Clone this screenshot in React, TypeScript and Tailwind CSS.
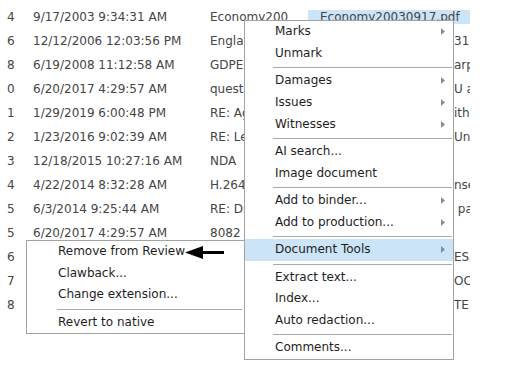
import React from 'react';

type Row = {
  n: string;
  date: string;
  subject: string;
  tail?: string;
  selected?: string;
};

// only the right end of the file-name column shows past the context menu
const rows: Row[] = [
  { n: '4', date: '9/17/2003 9:34:31 AM', subject: 'Economy20030917', selected: 'Economy20030917.pdf' },
  { n: '6', date: '12/12/2006 12:03:56 PM', subject: 'England_Trade', tail: '31:' },
  { n: '8', date: '6/19/2008 11:12:58 AM', subject: 'GDPEstimates', tail: 'arp' },
  { n: '0', date: '6/20/2017 4:29:57 AM', subject: 'question', tail: 'U a' },
  { n: '1', date: '1/29/2019 6:00:48 PM', subject: 'RE: Agenda', tail: 'ith' },
  { n: '2', date: '1/23/2016 9:02:39 AM', subject: 'RE: Lease', tail: 'Und' },
  { n: '3', date: '12/18/2015 10:27:16 AM', subject: 'NDA', tail: '' },
  { n: '4', date: '4/22/2014 8:32:28 AM', subject: 'H.264', tail: 'nse' },
  { n: '5', date: '6/3/2014 9:25:44 AM', subject: 'RE: Draft', tail: ' pa' },
  { n: '5', date: '6/20/2017 4:29:57 AM', subject: '8082', tail: '' },
  { n: '6', date: '3/14/2012 2:11:05 PM', subject: 'Minutes', tail: 'ES' },
  { n: '7', date: '8/2/2010 10:45:19 AM', subject: 'Contract', tail: 'OC' },
  { n: '8', date: '5/9/2011 3:38:40 PM', subject: 'Letter', tail: 'TEI' },
];

type Item = { label: string; sub?: boolean; active?: boolean } | 'sep';

const mainMenu: Item[] = [
  { label: 'Marks', sub: true },
  { label: 'Unmark' },
  'sep',
  { label: 'Damages', sub: true },
  { label: 'Issues', sub: true },
  { label: 'Witnesses', sub: true },
  'sep',
  { label: 'AI search...' },
  { label: 'Image document' },
  'sep',
  { label: 'Add to binder...', sub: true },
  { label: 'Add to production...', sub: true },
  'sep',
  { label: 'Document Tools', sub: true, active: true },
  'sep',
  { label: 'Extract text...' },
  { label: 'Index...' },
  { label: 'Auto redaction...' },
  'sep',
  { label: 'Comments...' },
];

const toolsMenu: Item[] = [
  { label: 'Remove from Review' },
  { label: 'Clawback...' },
  { label: 'Change extension...' },
  'sep',
  { label: 'Revert to native' },
];

function SubArrow() {
  return (
    <svg width="4" height="7" viewBox="0 0 4 7" className="shrink-0">
      <path d="M0 0 L4 3.5 L0 7 Z" fill="#8c8c8c" />
    </svg>
  );
}

function Menu({ items, pl, sepMl, sepMr }: { items: Item[]; pl: string; sepMl: string; sepMr: string }) {
  return (
    <>
      {items.map((it, i) =>
        it === 'sep' ? (
          <div key={i} className="h-[5.9px] pt-[3px]">
            <div className={`h-px bg-[#a9a9a9] ${sepMl} ${sepMr}`} />
          </div>
        ) : (
          <div
            key={i}
            className={`h-[21.6px] flex items-center justify-between pr-[8px] ${pl} ${it.active ? 'bg-[#cce4f7]' : ''}`}
          >
            <span className="leading-[15px] whitespace-nowrap">{it.label}</span>
            {it.sub && <SubArrow />}
          </div>
        )
      )}
    </>
  );
}

export default function App() {
  return (
    <div className="relative w-[513px] h-[382px] overflow-hidden bg-white font-['DejaVu_Sans',sans-serif] text-[12px]">
      {/* document list behind the menus */}
      <div className="pt-[5px] text-[#454545]">
        {rows.map((r, i) => (
          <div key={i} className="h-[24px] flex items-center whitespace-nowrap leading-[15px]">
            <div className="w-[33px] pl-[7px] shrink-0">{r.n}</div>
            <div className="w-[177px] shrink-0">{r.date}</div>
            <div className="w-[98px] shrink-0">
              <div className="w-[79px] overflow-hidden">{r.subject}</div>
            </div>
            <div className="w-[162px] shrink-0 overflow-hidden">
              {r.selected ? (
                <div className="bg-[#cce4f7] pl-[12px] h-[14px] leading-[14px]">{r.selected}</div>
              ) : (
                <div className="pl-[146px] whitespace-pre">{r.tail}</div>
              )}
            </div>
          </div>
        ))}
      </div>

      {/* Document Tools flyout */}
      <div className="absolute left-[26px] top-[240px] w-[220px] border border-[#a3a3a3] bg-white text-[#1e1e1e]">
        <Menu items={toolsMenu} pl="pl-[31px]" sepMl="ml-[30px]" sepMr="mr-[3px]" />
      </div>

      {/* context menu */}
      <div className="absolute left-[244px] top-[20px] w-[210px] border border-[#a3a3a3] bg-white text-[#1e1e1e]">
        <Menu items={mainMenu} pl="pl-[30px]" sepMl="ml-[28px]" sepMr="mr-[1px]" />
      </div>

      {/* callout arrow */}
      <svg className="absolute left-[185px] top-[246px]" width="39" height="13" viewBox="0 0 39 13">
        <path d="M0 6.5 L18 0 L18 13 Z" fill="#000" />
        <rect x="17" y="5" width="22" height="3" fill="#000" />
      </svg>
    </div>
  );
}
